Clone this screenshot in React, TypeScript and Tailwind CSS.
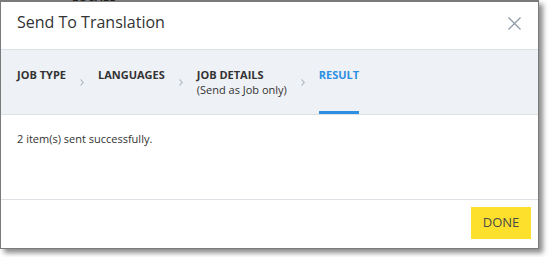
import React from 'react';

// --- Types ---

interface Step {
  label: string;
  sub?: string;
  active?: boolean;
}

const steps: Step[] = [
  { label: 'Job Type' },
  { label: 'Languages' },
  { label: 'Job Details', sub: '(Send as Job only)' },
  { label: 'Result', active: true },
];

const Chevron = () => (
  <svg width="4" height="7" viewBox="0 0 4 7" className="shrink-0">
    <polyline points="0.5,0.5 3.2,3.5 0.5,6.5" fill="none" stroke="#a9b1ba" strokeWidth="1.1" />
  </svg>
);

const App: React.FC = () => {
  return (
    <div className="relative w-[549px] h-[257px] overflow-hidden bg-white font-['Open_Sans',sans-serif] text-[#333]">
      {/* page text peeking out above the dialog */}
      <div className="absolute left-[72px] top-0 h-[2px] overflow-hidden z-10">
        <span className="block -mt-[9px] text-[11px] font-bold leading-[11px] text-[#222] tracking-wide">LOCALE</span>
      </div>

      <div className="flex flex-col w-[539px] h-[249px] bg-white border-t-2 border-l border-r border-b border-[#7b7b7b] shadow-[4px_4px_5px_rgba(0,0,0,0.45)]">
        {/* header */}
        <header className="flex items-start justify-between h-[48px] pl-[16px] pr-[17px] pt-[9px] border-b border-[#dde1e6]">
          <h1 className="text-[16px] leading-[23px] font-normal text-[#333]">Send To Translation</h1>
          <button className="mt-[6px]">
            <svg width="13" height="13" viewBox="0 0 13 13">
              <line x1="0.5" y1="0.5" x2="12.5" y2="12.5" stroke="#8e99a5" strokeWidth="1.2" />
              <line x1="12.5" y1="0.5" x2="0.5" y2="12.5" stroke="#8e99a5" strokeWidth="1.2" />
            </svg>
          </button>
        </header>

        {/* steps */}
        <nav className="flex items-stretch h-[65px] pl-[16px] bg-[#eef1f5] border-b border-[#dde1e6]">
          {steps.map((s, i) => (
            <React.Fragment key={s.label}>
              {i > 0 && (
                <div className="flex items-center px-[14px]">
                  <Chevron />
                </div>
              )}
              <div
                className={`flex flex-col pt-[17px] text-[11px] leading-[15px] ${
                  s.active ? 'border-b-[3px] border-[#2b8fe2]' : ''
                }`}
              >
                <span className={`font-bold uppercase ${s.active ? 'text-[#2b8fe2]' : 'text-[#333]'}`}>{s.label}</span>
                {s.sub && <span className="text-[#333]">{s.sub}</span>}
              </div>
            </React.Fragment>
          ))}
        </nav>

        {/* body */}
        <main className="flex-1 pl-[16px] pt-[16px] border-b border-[#dde1e6]">
          <p className="text-[11px] leading-[16px]">2 item(s) sent successfully.</p>
        </main>

        {/* footer */}
        <footer className="flex justify-end h-[48px] pt-[7px] pr-[7px]">
          <button className="w-[60px] h-[32px] bg-[#fde02b] text-[13px] text-[#4a4a4a] uppercase">Done</button>
        </footer>
      </div>
    </div>
  );
};

export default App;
